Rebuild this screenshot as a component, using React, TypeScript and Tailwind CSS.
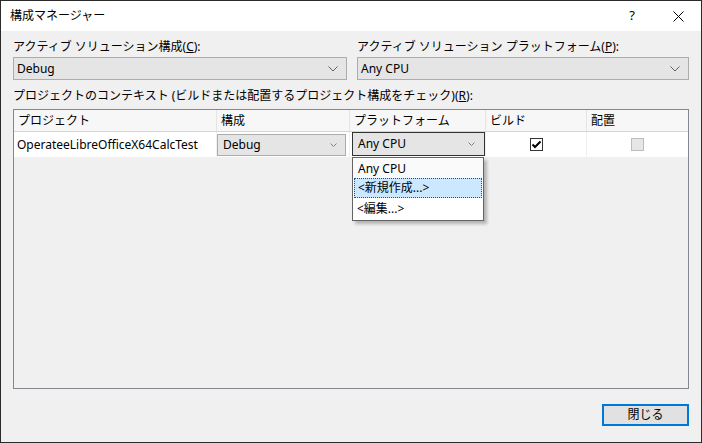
import React from "react";

const font = "font-['Segoe_UI','Noto_Sans','Noto_Sans_CJK_JP',sans-serif]";

function Chevron({ className = "" }: { className?: string }) {
  return (
    <svg width="10" height="6" viewBox="0 0 10 6" className={className}>
      <polyline points="0.5,0.5 5,5 9.5,0.5" fill="none" stroke="#606060" strokeWidth="1" />
    </svg>
  );
}

function Combo({ value, className = "" }: { value: string; className?: string }) {
  return (
    <div
      className={`flex items-center justify-between h-[23px] border border-[#acacac] bg-[#e5e5e5] pl-[3px] pr-[8px] ${className}`}
    >
      <span className="text-[12px] text-black">{value}</span>
      <Chevron />
    </div>
  );
}

export default function App() {
  return (
    <div className={`w-[702px] h-[443px] border border-[#2b2b2b] bg-[#f0f0f0] flex flex-col ${font}`}>
      {/* title bar */}
      <div className="h-[30px] bg-white flex items-center justify-between pl-[9px] shrink-0">
        <span className="text-[12px] text-black">構成マネージャー</span>
        <div className="flex items-center h-full">
          <div className="w-[46px] h-full flex items-center justify-center text-[13px]">?</div>
          <div className="w-[46px] h-full flex items-center justify-center">
            <svg width="11" height="11" viewBox="0 0 11 11">
              <path d="M0.5 0.5 L10.5 10.5 M10.5 0.5 L0.5 10.5" stroke="#000" strokeWidth="1" />
            </svg>
          </div>
        </div>
      </div>

      <div className="flex-1 flex flex-col px-[12px] pt-[8px]">
        {/* top combos */}
        <div className="flex gap-[10px]">
          <div className="w-[334px] flex flex-col">
            <span className="text-[12px] leading-[16px] h-[17px]">
              アクティブ ソリューション構成(<span className="underline">C</span>):
            </span>
            <Combo value="Debug" className="mt-[1px]" />
          </div>
          <div className="w-[332px] flex flex-col">
            <span className="text-[12px] leading-[16px] h-[17px]">
              アクティブ ソリューション プラットフォーム(<span className="underline">P</span>):
            </span>
            <Combo value="Any CPU" className="mt-[1px]" />
          </div>
        </div>

        <span className="text-[12px] leading-[16px] mt-[8px]">
          プロジェクトのコンテキスト (ビルドまたは配置するプロジェクト構成をチェック)(<span className="underline">R</span>):
        </span>

        {/* grid */}
        <div className="relative mt-[5px] w-[676px] h-[280px] border border-[#828790] bg-[#f0f0f0]">
          <div className="grid grid-cols-[203px_133px_136px_101px_101px] h-[22px] bg-[#f7f7f7] border-b border-[#d5d5d5] text-[12px]">
            <div className="pl-[4px] flex items-center border-r border-[#e5e5e5]">プロジェクト</div>
            <div className="pl-[4px] flex items-center border-r border-[#e5e5e5]">構成</div>
            <div className="pl-[4px] flex items-center border-r border-[#e5e5e5]">プラットフォーム</div>
            <div className="pl-[4px] flex items-center border-r border-[#e5e5e5]">ビルド</div>
            <div className="pl-[4px] flex items-center">配置</div>
          </div>
          <div className="grid grid-cols-[203px_133px_136px_101px_101px] h-[25px] bg-white text-[12px]">
            <div className="pl-[3px] flex items-center border-r border-[#f0f0f0]">OperateeLibreOfficeX64CalcTest</div>
            <div className="flex items-center pl-[0px] pr-[3px] border-r border-[#f0f0f0]">
              <div className="w-full h-[22px] border border-[#adadad] bg-[#e5e5e5] flex items-center justify-between pl-[5px] pr-[8px]">
                <span>Debug</span>
                <svg width="7" height="4" viewBox="0 0 7 4">
                  <polyline points="0.5,0.5 3.5,3.5 6.5,0.5" fill="none" stroke="#808080" strokeWidth="1" />
                </svg>
              </div>
            </div>
            <div className="flex items-start pl-[2px] border-r border-[#f0f0f0]">
              <div className="w-[133px] h-[24px] border border-[#333333] bg-[#e5e5e5] flex items-center justify-between pl-[5px] pr-[9px]">
                <span>Any CPU</span>
                <svg width="7" height="4" viewBox="0 0 7 4">
                  <polyline points="0.5,0.5 3.5,3.5 6.5,0.5" fill="none" stroke="#808080" strokeWidth="1" />
                </svg>
              </div>
            </div>
            <div className="flex items-center justify-center border-r border-[#f0f0f0]">
              <div className="w-[13px] h-[13px] border border-[#333333] bg-white flex items-center justify-center">
                <svg width="11" height="11" viewBox="0 0 11 11">
                  <polyline points="1.5,5.5 4,8 9.5,2.5" fill="none" stroke="#000" strokeWidth="2" />
                </svg>
              </div>
            </div>
            <div className="flex items-center justify-center">
              <div className="w-[13px] h-[13px] border border-[#bcbcbc] bg-[#e6e6e6]" />
            </div>
          </div>

          {/* dropdown list */}
          <div className="absolute left-[338px] top-[47px] w-[132px] bg-white border border-[#646464] shadow-[3px_3px_3px_rgba(0,0,0,0.25)] text-[12px] py-[1px]">
            <div className="h-[19px] flex items-center pl-[5px] bg-[#fafafa]">Any CPU</div>
            <div className="h-[20px] flex items-center pl-[3px] mx-[1px] bg-[#cce8ff] border border-dotted border-[#1e4f8a]">
              &lt;新規作成...&gt;
            </div>
            <div className="h-[21px] flex items-center pl-[4px]">&lt;編集...&gt;</div>
          </div>
        </div>

        <div className="flex justify-end mt-[15px]">
          <button className="w-[87px] h-[22px] border-2 border-[#0078d7] bg-[#e1e1e1] text-[12px] flex items-center justify-center">
            閉じる
          </button>
        </div>
      </div>
    </div>
  );
}
